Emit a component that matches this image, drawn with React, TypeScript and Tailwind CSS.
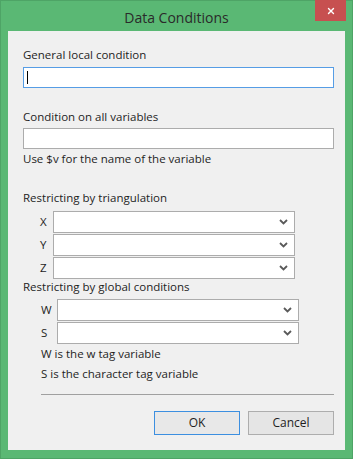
import { X } from 'lucide-react'

const FONT = { fontFamily: '"Open Sans", "Liberation Sans", sans-serif' }

function Chevron() {
  return (
    <svg width="9" height="6" viewBox="0 0 9 6" className="shrink-0">
      <path d="M1 1 L4.5 4.5 L8 1" fill="none" stroke="#5a5a5a" strokeWidth="1.8" />
    </svg>
  )
}

function Combo({ width }: { width: string }) {
  return (
    <div
      className={`${width} h-[22px] bg-white border border-[#acacac] flex items-center justify-end pr-[6px]`}
    >
      <Chevron />
    </div>
  )
}

function ComboRow({ label, width, labelWidth }: { label: string; width: string; labelWidth: string }) {
  return (
    <div className="flex items-center">
      <div className={labelWidth}>{label}</div>
      <Combo width={width} />
    </div>
  )
}

export default function App() {
  return (
    <div
      className="w-[353px] h-[459px] bg-[#5ab874] border border-[#4ea466] flex flex-col text-[#1e1e1e]"
      style={FONT}
    >
      {/* Title bar */}
      <div className="relative h-[30px] flex items-center justify-center shrink-0">
        <span className="text-[14px] text-[#2a2a2a] mt-[2px]">Data Conditions</span>
        <button
          type="button"
          className="absolute top-[-1px] right-[6px] w-[31px] h-[21px] bg-[#c75050] flex items-center justify-center"
        >
          <X size={10} strokeWidth={3.2} color="white" />
        </button>
      </div>

      {/* Body */}
      <div className="mx-[7px] h-[419px] bg-[#f0f0f0] pl-[15px] pr-[11px] text-[11.5px] leading-[16px]">
        <div className="pt-[16px]">General local condition</div>
        <div className="mt-[4px] h-[21px] bg-white border border-[#569de5] flex items-center pl-[3px]">
          <div className="w-px h-[13px] bg-black" />
        </div>

        <div className="mt-[21px]">Condition on all variables</div>
        <div className="mt-[3px] h-[21px] bg-white border border-[#acacac]" />
        <div className="mt-[2px]">Use $v for the name of the variable</div>

        <div className="mt-[23px]">Restricting by triangulation</div>
        <div className="mt-[5px] flex flex-col gap-px">
          <ComboRow label="X" labelWidth="w-[30px] pl-[17px]" width="w-[242px]" />
          <ComboRow label="Y" labelWidth="w-[30px] pl-[17px]" width="w-[242px]" />
          <ComboRow label="Z" labelWidth="w-[30px] pl-[17px]" width="w-[242px]" />
        </div>

        <div>Restricting by global conditions</div>
        <div className="mt-[4px] flex flex-col gap-px">
          <ComboRow label="W" labelWidth="w-[34px] pl-[18px]" width="w-[242px]" />
          <ComboRow label="S" labelWidth="w-[34px] pl-[18px]" width="w-[242px]" />
        </div>

        <div className="pl-[18px]">
          <div className="mt-[2px]">W is the w tag variable</div>
          <div className="mt-[4px]">S is the character tag variable</div>
          <div className="mt-[12px] h-px bg-[#a0a0a0]" />
        </div>

        <div className="mt-[16px] flex justify-end gap-[8px]">
          <button
            type="button"
            className="w-[86px] h-[24px] border border-[#3c8fe0] bg-[#e8e8e8] text-[12px]"
          >
            OK
          </button>
          <button
            type="button"
            className="w-[86px] h-[24px] border border-[#adadad] bg-[#e5e5e5] text-[12px]"
          >
            Cancel
          </button>
        </div>
      </div>
    </div>
  )
}
